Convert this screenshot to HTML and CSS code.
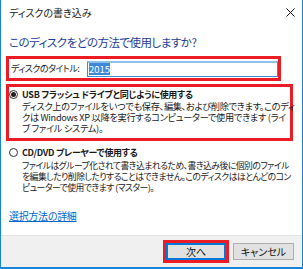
FILE: index.html
```html
<!DOCTYPE html>
<html lang="ja">
<head>
    <meta charset="UTF-8">
    <title>ディスクの書き込み</title>
    <link rel="stylesheet" href="styles.css">
</head>
<body>

<div class="window">
    <div class="titlebar">
        <span class="title">ディスクの書き込み</span>
        <svg class="close" width="9" height="9" viewBox="0 0 9 9">
            <path d="M0.5 0.5 L8.5 8.5 M8.5 0.5 L0.5 8.5" stroke="#111" stroke-width="1"/>
        </svg>
    </div>

    <div class="main">
        <h1 class="heading">このディスクをどの方法で使用しますか?</h1>

        <div class="mark title-box">
            <label for="disc-title">ディスクのタイトル:</label>
            <div class="textbox" id="disc-title"><span class="selected">2015</span></div>
        </div>

        <div class="mark option-box">
            <div class="option">
                <span class="radio checked"></span>
                <span class="option-label">USB フラッシュ ドライブと同じように使用する</span>
            </div>
            <p class="desc">ディスク上のファイルをいつでも保存、編集、および削除できます。このディ<br>クは Windows XP 以降を実行するコンピューターで使用できます (ライ<br>ブ ファイル システム)。</p>
        </div>

        <div class="option option-plain">
            <span class="radio"></span>
            <span class="option-label">CD/DVD プレーヤーで使用する</span>
        </div>
        <p class="desc desc-plain">ファイルはグループ化されて書き込まれるため、書き込み後に個別のファイル<br>を編集したり削除したりすることはできません。このディスクはほとんどのコン<br>ピューターで使用できます (マスター)。</p>

        <a href="#" class="more">選択方法の詳細</a>
    </div>

    <div class="footer">
        <div class="mark next-box">
            <button class="btn btn-default">次へ</button>
        </div>
        <button class="btn">キャンセル</button>
    </div>
</div>

</body>
</html>
```

FILE: styles.css
```css
body {
    margin: 0;
    padding: 0;
    font-family: "Noto Sans CJK JP", sans-serif;
    font-feature-settings: "palt";
    color: #1a1a1a;
    background-color: #fff;
}
.window {
    width: 303px;
    height: 269px;
    box-sizing: border-box;
    border: 1px solid #1883d7;
    border-top: none;
    border-bottom-width: 2px;
    display: flex;
    flex-direction: column;
    background-color: #fff;
    overflow: hidden;
}
.titlebar {
    height: 26px;
    display: flex;
    align-items: center;
    justify-content: space-between;
    padding: 0 7px 0 8px;
}
.title {
    font-size: 10px;
    line-height: 12px;
    color: #222;
}
.close {
    display: block;
    margin-top: -2px;
}
.main {
    flex: 1;
    padding: 0 0 0 5px;
}
.heading {
    margin: 6px 0 4px 3px;
    font-size: 11.5px;
    letter-spacing: -0.5px;
    line-height: 20px;
    font-weight: normal;
    color: #1f3d96;
}
.mark {
    border: 3px solid #ec1c24;
}
.title-box {
    width: 275px;
    box-sizing: border-box;
    height: 25px;
    display: flex;
    align-items: center;
    justify-content: space-between;
    padding: 0 0 0 2px;
    font-size: 9px;
    letter-spacing: -0.5px;
}
.title-box label {
    white-space: nowrap;
}
.textbox {
    flex-shrink: 0;
    width: 191px;
    height: 16px;
    box-sizing: border-box;
    border: 1px solid #3d8ad6;
    border-top: 2px solid #8fc0ea;
    display: flex;
    align-items: center;
    padding-left: 1px;
    font-size: 9.5px;
    letter-spacing: 0;
}
.selected {
    background-color: #3b89d8;
    color: #fff;
    line-height: 12px;
}
.option-box {
    width: 287px;
    box-sizing: border-box;
    height: 57px;
    margin-top: 3px;
    padding-top: 1px;
}
.option {
    display: flex;
    align-items: center;
    height: 13px;
    font-size: 9px;
    letter-spacing: -0.3px;
    font-weight: bold;
    white-space: nowrap;
}
.radio {
    flex-shrink: 0;
    width: 9px;
    height: 9px;
    box-sizing: border-box;
    border: 1px solid #333;
    border-radius: 50%;
    margin: 0 4px 0 0;
    display: flex;
    align-items: center;
    justify-content: center;
}
.radio.checked::after {
    content: "";
    width: 5px;
    height: 5px;
    border-radius: 50%;
    background-color: #222;
}
.desc {
    margin: 0 0 0 13px;
    font-size: 9.2px;
    letter-spacing: -0.3px;
    line-height: 11px;
    white-space: nowrap;
}
.option-plain {
    margin-top: 5px;
    padding-left: 3px;
}
.desc-plain {
    margin: 1px 0 0 16px;
    font-size: 8.8px;
    letter-spacing: -0.5px;
}
.more {
    display: inline-block;
    margin: 17px 0 0 3px;
    font-size: 10px;
    letter-spacing: -0.3px;
    line-height: 12px;
    color: #0066cc;
}
.footer {
    height: 32px;
    box-sizing: border-box;
    background-color: #f0f0f0;
    border-top: 1px solid #e3e3e3;
    display: flex;
    align-items: center;
    justify-content: flex-end;
    gap: 4px;
    padding: 0 8px 0 0;
}
.btn {
    width: 61px;
    height: 17px;
    box-sizing: border-box;
    border: 1px solid #adadad;
    background-color: #e1e1e1;
    font-family: "Noto Sans CJK JP", sans-serif;
    font-feature-settings: "palt";
    font-size: 10px;
    color: #111;
    padding: 0;
}
.btn-default {
    width: 60px;
    display: block;
    border: 1px solid #0078d7;
    box-shadow: inset 0 0 0 1px #0078d7;
}
```
